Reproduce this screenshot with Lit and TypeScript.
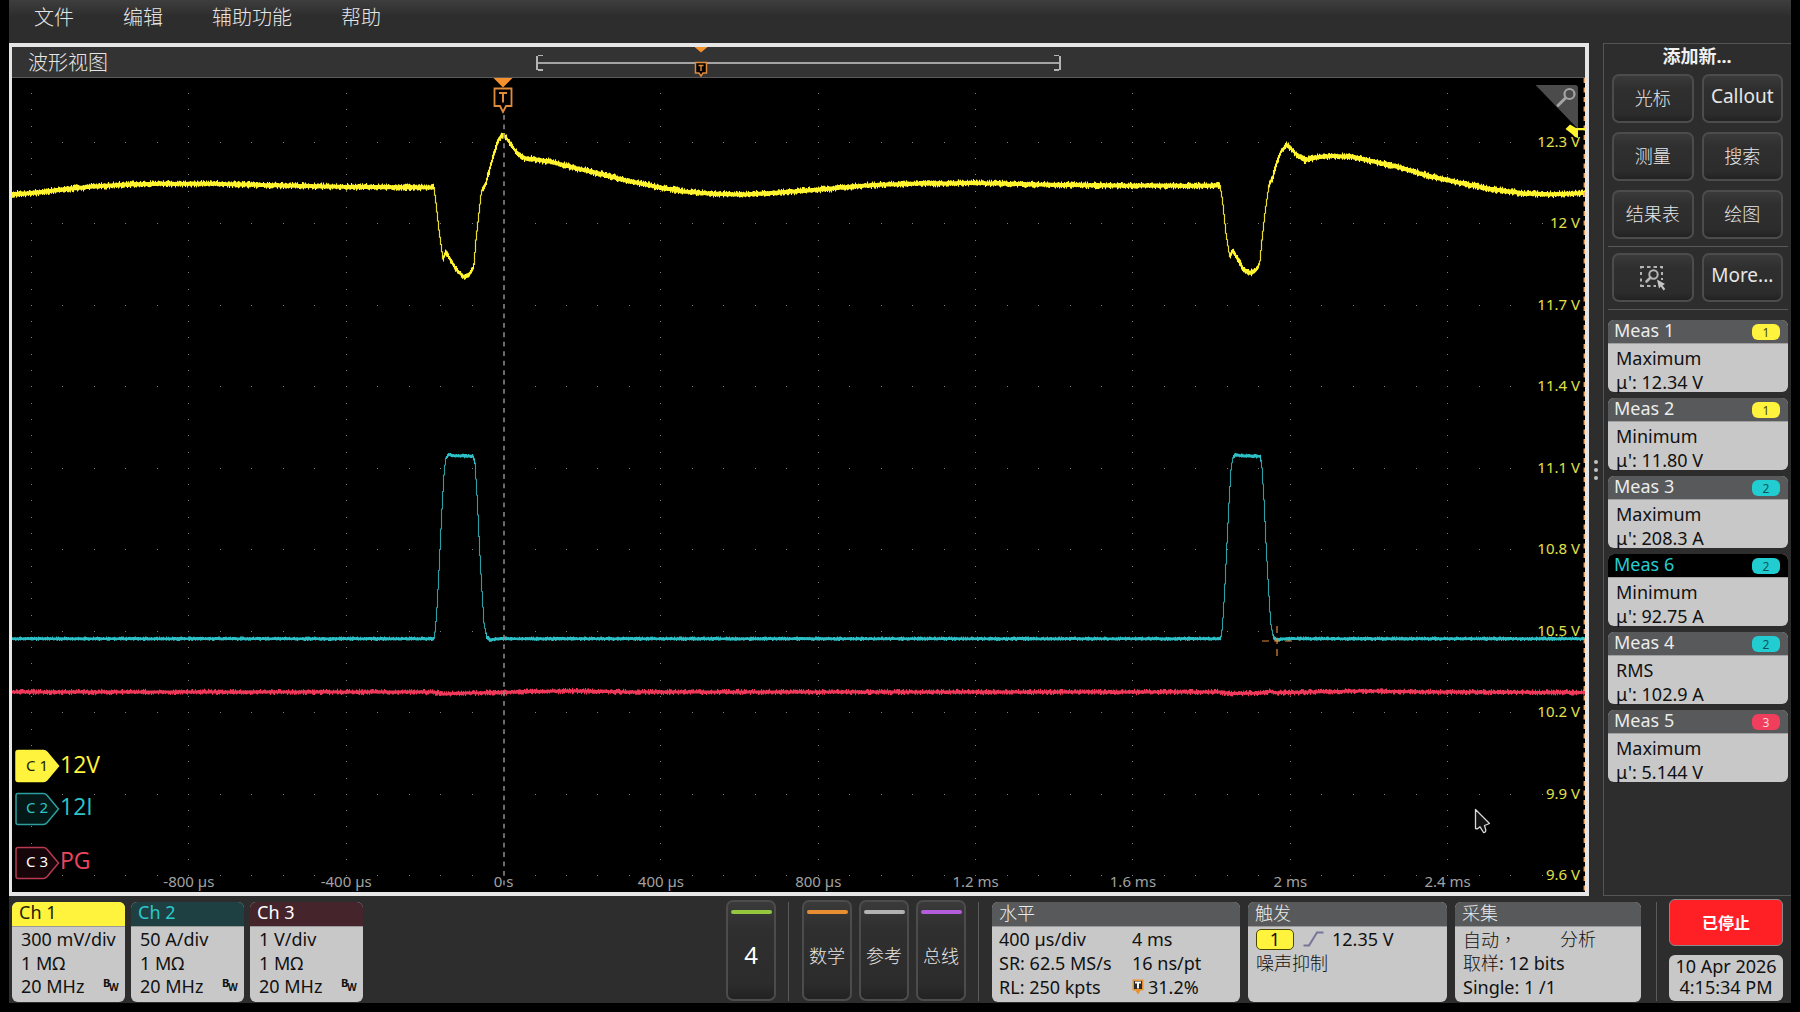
import { LitElement, html, svg, css } from "lit";
import { customElement, property } from "lit/decorators.js";
import { classMap } from "lit/directives/class-map.js";
import { styleMap } from "lit/directives/style-map.js";

type Point = [number, number];

/* Plot canvas units; the drawing scales with the window. */
const PLOT_W = 1573;
const PLOT_H = 814;
const GRID_X0 = 19.5;
const GRID_Y0 = 64.8;
const DIV_X = 157.35;
const DIV_Y = 81.5;
const TRIGGER_X = 492;

const CH1: Point[] = [
  [0, 116.2], [19, 115.1], [38, 113], [57, 110.8], [84, 108.3], [114, 106.5], [149, 105.8], [202, 105.8],
  [256, 107.2], [332, 108.8], [422, 109.5], [424, 125], [427, 152], [431, 181], [434, 173.7], [439.6, 184],
  [445.3, 192.7], [452, 199], [457, 196.7], [461.8, 189], [464, 162], [467, 135], [469.5, 112.7], [474, 105],
  [478, 90], [481.7, 77], [485.5, 63.7], [490, 57], [492.5, 57.5], [497, 63.7], [502.7, 72], [508.5, 78.2],
  [514, 80.5], [523.8, 81.5], [539, 83.8], [554.4, 87.8], [569.7, 91.5], [588, 95.8], [614.8, 102.5], [645.4, 109],
  [672, 113.5], [702.8, 116], [729.6, 116.5], [760, 115], [806, 111.6], [856, 107.3], [894, 105.8], [963, 105],
  [1028, 106.6], [1104.6, 107.6], [1188, 107.8], [1208, 107.4], [1210.5, 122], [1214, 155.3], [1217.8, 179.3],
  [1220.5, 172], [1226.3, 182], [1232, 192], [1237.8, 195], [1243.5, 192.7], [1247.7, 186], [1250, 162],
  [1253, 135.3], [1257, 107], [1260.7, 100], [1264.5, 85.3], [1269, 73.7], [1274.5, 67], [1278, 69.3],
  [1283.7, 76], [1293, 82.2], [1306.6, 79], [1320, 78], [1341, 78.7], [1360, 83.2], [1387, 89.2], [1417.6, 98.2],
  [1448, 105], [1479, 111], [1513, 115.6], [1540, 116.3], [1573, 115],
];

const CH2_PULSE: Point[] = [
  [0, 560.7], [1.3, 552], [2.7, 535], [4.7, 498.7], [6.3, 465], [8.3, 425], [10.3, 392], [12, 380],
  [15, 376.5], [19, 377.7], [39.3, 378.3], [41, 385], [43.3, 422], [45.3, 465], [47.7, 508.7], [50, 545],
  [52.7, 559.5], [56.7, 562], [62.7, 560.7],
];
const CH2: Point[] = [
  [-1, 560.7],
  ...CH2_PULSE.map(([x, y]): Point => [x + 422, y]),
  ...CH2_PULSE.map(([x, y]): Point => [x + 1208.7, y]),
  [1574, 560.7],
];
const CH3: Point[] = [
  [0, 614], [421, 614], [431, 616], [455, 615], [477, 614.6], [492, 614.6], [510, 613.6], [560, 613], [620, 614],
  [1208, 614], [1218, 615.6], [1250, 615], [1258, 613.4], [1264, 614.8], [1300, 614], [1350, 613], [1420, 614], [1573, 614.4],
];

function seeded(seed: number): () => number {
  let s = seed;
  return () => {
    s = (s * 1664525 + 1013904223) >>> 0;
    return s / 4294967296;
  };
}

/* One vertical stroke per column: the band widens on flat stretches, thins on edges. */
function trace(points: Point[], half: number, noise: number, seed: number): { flat: string; steep: string } {
  const rand = seeded(seed);
  let i = 0;
  const at = (x: number): number => {
    while (i < points.length - 2 && points[i + 1][0] < x) i++;
    const [x0, y0] = points[i];
    const [x1, y1] = points[i + 1];
    return y0 + ((y1 - y0) * (x - x0)) / (x1 - x0);
  };
  let flat = "";
  let steep = "";
  for (let x = 0; x < PLOT_W; x++) {
    const a = at(x);
    const b = at(x + 1);
    const slope = Math.abs(b - a);
    const h = slope > 4 ? 0.4 : slope > 0.9 ? half * 0.65 : half;
    const n = slope > 4 ? 0 : noise;
    const top = Math.min(a, b) - h - n * rand() ** 2;
    const bottom = Math.max(a, b) + h + n * rand() ** 2;
    const seg = `M${x + 0.5} ${top.toFixed(1)}V${bottom.toFixed(1)}`;
    if (slope > 4) steep += seg;
    else flat += seg;
  }
  return { flat, steep };
}

function gridDots(): string {
  let d = "";
  for (let r = 0; r < 10; r++) {
    const y = Math.round(GRID_Y0 + r * DIV_Y) - 0.5;
    for (let c = 1; c <= 48; c++) {
      if (c % 5) d += `M${Math.floor(GRID_X0 + (c * DIV_X) / 5)} ${y}h1`;
    }
  }
  for (let c = 0; c < 10; c++) {
    const x = Math.floor(GRID_X0 + c * DIV_X);
    if (c === 3) continue;
    for (let m = -3; m <= 45; m++) d += `M${x} ${Math.round(GRID_Y0 + (m * DIV_Y) / 5) - 0.5}h1`;
  }
  return d;
}

const GRID = gridDots();
const T1 = trace(CH1, 1.9, 2, 7);
const T2 = trace(CH2, 1.3, 1, 21);
const T3 = trace(CH3, 1.4, 1.8, 99);

const pct = (v: number, total: number): string => `${((v / total) * 100).toFixed(3)}%`;

const VOLTS = ["12.3 V", "12 V", "11.7 V", "11.4 V", "11.1 V", "10.8 V", "10.5 V", "10.2 V", "9.9 V", "9.6 V"];
const TIMES = ["-800 µs", "-400 µs", "0 s", "400 µs", "800 µs", "1.2 ms", "1.6 ms", "2 ms", "2.4 ms"];

@customElement("scope-plot")
export class ScopePlot extends LitElement {
  static styles = css`
    :host {
      display: block;
      position: relative;
      flex: 1;
      min-height: 400px;
      background: #000;
      overflow: hidden;
    }
    .canvas {
      position: absolute;
      inset: 0;
      width: 100%;
      height: 100%;
      display: block;
    }
    .volt, .time, .mark, .handle {
      position: absolute;
      white-space: nowrap;
    }
    .volt {
      right: 5px;
      transform: translateY(-50%);
      font-size: 15px;
      line-height: 16px;
      color: #e2e04a;
    }
    .time {
      bottom: 3px;
      transform: translateX(-50%);
      font-size: 15px;
      line-height: 16px;
      color: #a2a2a2;
    }
    .trigger {
      top: 0;
      width: 20px;
      height: 36px;
      transform: translateX(-50%);
    }
    .zoom { top: 6px; right: 0; width: 52px; height: 56px; }
    .cursor { width: 18px; height: 28px; }
    .cross { width: 32px; height: 32px; transform: translate(-50%, -50%); }
    .handle {
      left: 3px;
      display: flex;
      align-items: center;
      height: 34px;
      transform: translateY(-50%);
    }
    .tag {
      display: grid;
      width: 45px;
      height: 34px;
    }
    .tag svg, .tag span { grid-area: 1 / 1; }
    .tag span {
      align-self: center;
      padding-left: 11px;
      font-size: 15px;
      line-height: 20px;
      padding-bottom: 3px;
    }
    .name { font-family: "Open Sans", "Noto Sans", sans-serif; font-size: 23px; line-height: 30px; padding-bottom: 5px; }
    .c1 .tag span { color: #1c1c00; }
    .c1 .name { color: #fff33d; }
    .c2 .tag span, .c2 .name { color: #2cc4c6; }
    .c3 .tag span { color: #fff; }
    .c3 .name { color: #ea4660; }
  `;

  private handle(cls: string, y: number, tag: string, name: string, fill: string, stroke: string) {
    return html`<div class="handle ${cls}" style=${styleMap({ top: pct(y, PLOT_H) })}>
      <div class="tag">
        <svg viewBox="0 0 45 34" aria-hidden="true">
          <path d="M3 1.5H28.5Q30.5 1.5 32 3.2L43.5 17L32 30.8Q30.5 32.5 28.5 32.5H3Q1 32.5 1 30.5V3.5Q1 1.5 3 1.5Z" fill=${fill} stroke=${stroke} stroke-width="1.5" />
        </svg>
        <span>${tag}</span>
      </div>
      <div class="name">${name}</div>
    </div>`;
  }

  render() {
    return html`
      <svg class="canvas" viewBox="0 0 ${PLOT_W} ${PLOT_H}" preserveAspectRatio="none" aria-hidden="true">
        <path d=${GRID} stroke="#7c7c7c" stroke-width="1" />
        ${svg`
          <path d=${T3.flat + T3.steep} stroke="#f0385a" stroke-width="1.1" />
          <path d=${T2.steep} stroke="#2a9ea2" stroke-width="1.1" />
          <path d=${T2.flat} stroke="#2cc0c6" stroke-width="1.1" />
          <path d=${T1.steep} stroke="#e8dc30" stroke-width="1.2" />
          <path d=${T1.flat} stroke="#fff42e" stroke-width="1.1" />
          <path d=${`M${TRIGGER_X} 37V812`} stroke="#8e8e8e" stroke-width="1.5" stroke-dasharray="4.8 4.65" />
          <path d=${`M${PLOT_W - 0.7} 0V${PLOT_H}`} stroke="#f0a868" stroke-width="1.4" stroke-dasharray="5 4.5" />`}
      </svg>
      ${VOLTS.map((v, i) => html`<span class="volt" style=${styleMap({ top: pct(GRID_Y0 - 2 + i * DIV_Y, PLOT_H) })}>${v}</span>`)}
      ${TIMES.map((t, i) => html`<span class="time" style=${styleMap({ left: pct(GRID_X0 + (i + 1) * DIV_X, PLOT_W) })}>${t}</span>`)}
      <svg class="mark trigger" viewBox="0 0 20 36" style=${styleMap({ left: pct(TRIGGER_X - 0.5, PLOT_W) })} aria-hidden="true">
        <path d="M0.5 0H19.5L10 9.5Z" fill="#f6902c" />
        <path d="M1.5 10.5H18.5V28H13L10 34L7 28H1.5Z" fill="#000" stroke="#e08a3c" stroke-width="1.8" />
        <path d="M6 15H14M10 15V24.5" stroke="#e08a3c" stroke-width="2" fill="none" />
      </svg>
      <svg class="mark zoom" viewBox="0 0 52 56" aria-hidden="true">
        <path d="M2.5 1H42Q45 1 45 4V45Z" fill="#4b4b4b" />
        <circle cx="36.5" cy="10" r="5" fill="none" stroke="#a4a4a4" stroke-width="2.2" />
        <path d="M32.5 14L25 21.5" stroke="#a4a4a4" stroke-width="3" stroke-linecap="round" />
        <path d="M32.5 45L37 40.5L43 44H52V46.2H45V54Q41 53 39 50Z" fill="#fff42e" />
      </svg>
      <svg class="mark cross" viewBox="0 0 32 32" style=${styleMap({ left: pct(1265.5, PLOT_W), top: pct(563.5, PLOT_H) })} aria-hidden="true">
        <path d="M1 16H8M13 16H19M24 16H31M16 1V8M16 13V19M16 24V31" stroke="#e08a3c" stroke-width="1.2" fill="none" />
      </svg>
      <svg class="mark cursor" viewBox="0 0 18 28" style=${styleMap({ left: pct(1462.5, PLOT_W), top: pct(730, PLOT_H) })} aria-hidden="true">
        <path d="M1.5 1.5V20.5L3.5 20.8L6 18.8L9.5 24.5Q12 24.5 11.8 22L10.5 17.5L15.5 15.5Z" fill="#111" stroke="#d8d8d8" stroke-width="1.3" stroke-linejoin="round" />
      </svg>
      ${this.handle("c1", 688, "C 1", "12V", "#fff33d", "#fff33d")}
      ${this.handle("c2", 731, "C 2", "12I", "#041818", "#2c9ea0")}
      ${this.handle("c3", 785, "C 3", "PG", "#16060a", "#b83a50")}
    `;
  }
}

@customElement("meas-card")
export class MeasCard extends LitElement {
  @property() label = "";
  @property() kind = "";
  @property() value = "";
  @property({ type: Number }) channel = 1;
  @property({ type: Boolean }) active = false;

  static styles = css`
    :host { display: block; }
    .card {
      height: 72px;
      border-radius: 6px;
      background: #c8c8c8;
      color: #111;
      font-size: 18px;
      line-height: 24px;
      white-space: nowrap;
    }
    .head {
      display: flex;
      align-items: center;
      justify-content: space-between;
      height: 24px;
      padding: 0 8px 0 6px;
      background: #58595a;
      border-bottom: 1px solid #a0a0a0;
      border-radius: 6px 6px 0 0;
      box-sizing: border-box;
      color: #ececec;
    }
    .title { line-height: 20px; padding-bottom: 3px; }
    .active { background: #000; color: #25cdd2; }
    .badge {
      width: 28px;
      height: 16px;
      box-sizing: border-box;
      border-radius: 6px;
      text-align: center;
      font-size: 12px;
      line-height: 17px;
    }
    .ch1 { background: #fff33d; color: #4a4710; }
    .ch2 { background: #22cdd2; color: #0d5558; }
    .ch3 { background: #f03e5c; color: #ffd8de; }
    .body { padding: 2px 8px 0; }
  `;

  render() {
    return html`<div class="card">
      <div class=${classMap({ head: true, active: this.active })}>
        <span class="title">${this.label}</span>
        <span class="badge ch${this.channel}">${this.channel}</span>
      </div>
      <div class="body"><div>${this.kind}</div><div>${this.value}</div></div>
    </div>`;
  }
}

const MEAS = [
  { label: "Meas 1", kind: "Maximum", value: "μ': 12.34 V", channel: 1 },
  { label: "Meas 2", kind: "Minimum", value: "μ': 11.80 V", channel: 1 },
  { label: "Meas 3", kind: "Maximum", value: "μ': 208.3 A", channel: 2 },
  { label: "Meas 6", kind: "Minimum", value: "μ': 92.75 A", channel: 2, active: true },
  { label: "Meas 4", kind: "RMS", value: "μ': 102.9 A", channel: 2 },
  { label: "Meas 5", kind: "Maximum", value: "μ': 5.144 V", channel: 3 },
];

const CHANNELS = [
  { cls: "k1", name: "Ch 1", scale: "300 mV/div" },
  { cls: "k2", name: "Ch 2", scale: "50 A/div" },
  { cls: "k3", name: "Ch 3", scale: "1 V/div" },
];

@customElement("app-root")
export class AppRoot extends LitElement {
  static styles = css`
    :host {
      display: block;
      background: #000;
      font-family: "Noto Sans", "Noto Sans CJK SC", sans-serif;
      color: #e6e6e6;
    }
    button { font: inherit; color: inherit; margin: 0; padding: 0; border: 0; background: none; }
    .app {
      display: flex;
      flex-direction: column;
      box-sizing: border-box;
      min-height: 100vh;
      padding: 0 9px;
      border-bottom: 9px solid #000;
    }
    .menu {
      display: flex;
      gap: 49px;
      align-items: flex-start;
      height: 43px;
      padding-left: 25px;
      background: linear-gradient(#3e3e3e, #2d2d2d 38%);
    }
    .menu button { font-size: 20px; line-height: 36px; font-weight: 300; }
    .main { display: flex; flex: 1; background: #2d2d2d; }
    .view {
      display: flex;
      flex-direction: column;
      flex: 1;
      min-width: 0;
      border: 4px solid #e6e6e6;
      border-left-width: 3px;
    }
    .bar {
      display: grid;
      grid-template-columns: repeat(3, 1fr);
      height: 31px;
      box-sizing: border-box;
      background: #333;
      border-bottom: 1px solid #5a5a5a;
    }
    .bar h1 { margin: 0; padding-left: 16px; font-size: 20px; line-height: 32px; height: 30px; font-weight: 300; }
    .overview {
      position: relative;
      align-self: center;
      height: 14px;
      margin-top: 2px;
      border: 2px solid #b4b4b4;
      border-width: 0 2px;
    }
    .overview::before {
      content: "";
      position: absolute;
      left: 0;
      right: 0;
      top: 6px;
      height: 2px;
      background: #a4a4a4;
    }
    .end { position: absolute; top: -1px; width: 5px; height: 13px; border: solid #b4b4b4; border-width: 1px 0 2px; }
    .end.l { left: 0; }
    .end.r { right: 0; }
    .pos { position: absolute; top: -9px; width: 14px; height: 30px; transform: translateX(-50%); }
    .grip {
      display: flex;
      flex-direction: column;
      align-items: center;
      justify-content: center;
      gap: 4px;
      width: 14px;
    }
    .grip i { width: 4px; height: 4px; border-radius: 50%; background: #c2c2c2; }
    .side {
      width: 188px;
      box-sizing: border-box;
      border: 1px solid #555;
      border-right: 0;
      padding: 0 3px 0 4px;
    }
    .side h2 { margin: 0 0 6px; text-align: center; font-size: 18px; line-height: 24px; font-weight: 700; padding-right: 2px; color: #f0f0f0; }
    .pad {
      display: grid;
      grid-template-columns: 1fr 1fr;
      gap: 9px 8px;
      padding: 0 5px 7px 4px;
      border-bottom: 1px solid #585858;
    }
    .pad + .pad { padding-top: 6px; }
    .pad button, .pill {
      box-sizing: border-box;
      border: 2px solid #4c4c4c;
      border-radius: 7px;
      background: linear-gradient(#3a3a3a, #2f2f2f 28%, #2c2c2c 84%, #222);
      font-size: 18px;
      font-weight: 300;
    }
    .pad button { height: 49px; display: grid; place-items: center; line-height: 24px; }
    .pad button span { padding-bottom: 2px; }
    .pad button .latin { font-size: 19px; font-weight: 400; padding-bottom: 5px; }
    .list { display: grid; gap: 6px; padding-top: 10px; }
    .bottom {
      display: flex;
      align-items: flex-start;
      height: 107px;
      box-sizing: border-box;
      padding: 6px 8px 0 3px;
      background: #2d2d2d;
      white-space: nowrap;
    }
    .chs { display: flex; gap: 6px; margin-right: auto; }
    .panel {
      display: flex;
      flex-direction: column;
      height: 100px;
      box-sizing: border-box;
      border-radius: 6px;
      overflow: hidden;
      background: #c8c8c8;
      color: #111;
      font-size: 18px;
      line-height: 24px;
    }
    .panel header { height: 24px; line-height: 22px; padding: 0 7px; background: #57595a; color: #ececec; border-bottom: 1px solid #9a9a9a; }
    .panel.ch header { line-height: 20px; }
    .ch { width: 113px; }
    .ch .body { padding: 0 9px; }
    .panel.k1 header { background: #fff33d; color: #222200; }
    .panel.k2 header { background: #1e4042; color: #2cc8cc; }
    .panel.k3 header { background: #46242c; color: #fff; }
    .last { display: flex; justify-content: space-between; line-height: 22px; }
    .bw { width: 15px; height: 16px; margin-right: -2px; position: relative; font-size: 11px; line-height: 12px; padding-top: 2px; font-weight: 700; }
    .bw sub { position: absolute; left: 6px; top: 6px; font-size: 10px; line-height: 12px; }
    .group { display: flex; gap: 7px; }
    .pill {
      display: flex;
      flex-direction: column;
      align-items: center;
      width: 50px;
      height: 101px;
      padding: 8px 2px 0;
      margin-top: -2px;
    }
    .pill i { width: 41px; height: 4px; border-radius: 2px; }
    .pill span { margin: auto; padding-bottom: 1px; line-height: 26px; }
    .pill .big { font-size: 24px; font-weight: 400; color: #fff; padding-bottom: 3px; }
    .green { background: #93c83c; }
    .orange { background: #e88e30; }
    .grey { background: #b2b2b2; }
    .violet { background: #b45edc; }
    .sep { width: 1px; height: 99px; background: #5a5a5a; }
    .s1 { margin: 0 13px 0 12px; }
    .s2 { margin: 0 13px 0 12px; }
    .s3 { margin: 0 12px 0 15px; }
    .panels { display: flex; gap: 8px; }
    .horiz { width: 248px; }
    .trig { width: 199px; }
    .acq { width: 186px; }
    .two { display: grid; grid-template-columns: 133px 1fr; padding: 0 7px; }
    .two span { display: flex; align-items: center; gap: 4px; }
    .body { padding: 0 8px; }
    .line { display: flex; align-items: center; height: 24px; }
    .src { width: 38px; height: 21px; box-sizing: border-box; border: 1px solid #4a4700; border-radius: 5px; background: #fff33d; text-align: center; line-height: 18px; }
    .slope { margin: 0 8px 0 9px; }
    .auto { width: 97px; font-family: "Noto Sans CJK TC", sans-serif; }
    .thin, .panel.info header { font-weight: 300; }
    .status { display: grid; gap: 9px; width: 114px; margin-top: -3px; }
    .stop { height: 47px; border: 1px solid #8a8a8a; border-radius: 6px; background: #ff2026; color: #fff; font-size: 16px; line-height: 24px; font-weight: 700; }
    .clock { height: 46px; padding-top: 1px; box-sizing: border-box; border-radius: 6px; background: #c8c8c8; color: #111; font-size: 18px; line-height: 21px; text-align: center; }
    .clock time { display: block; }
    svg { display: block; flex: none; }
  `;

  private pill(color: string, label: string, big = false) {
    return html`<button class="pill" type="button"><i class=${color}></i><span class=${classMap({ big })}>${label}</span></button>`;
  }

  render() {
    return html`<div class="app">
      <nav class="menu">
        ${["文件", "编辑", "辅助功能", "帮助"].map((m) => html`<button type="button">${m}</button>`)}
      </nav>
      <div class="main">
        <section class="view">
          <div class="bar">
            <h1>波形视图</h1>
            <div class="overview">
              <i class="end l"></i><i class="end r"></i>
              <svg class="pos" style=${styleMap({ left: "31.2%" })} viewBox="0 0 14 30" aria-hidden="true">
                <path d="M0.5 0H13.5L7 5.5Z" fill="#f6902c" />
                <path d="M1.5 15.5H12.5V26H9L7 29L5 26H1.5Z" fill="#000" stroke="#e08a3c" stroke-width="1.5" />
                <path d="M4.5 18.5H9.5M7 18.5V24" stroke="#e08a3c" stroke-width="1.4" fill="none" />
              </svg>
            </div>
          </div>
          <scope-plot></scope-plot>
        </section>
        <div class="grip" aria-hidden="true"><i></i><i></i><i></i></div>
        <aside class="side">
          <h2>添加新...</h2>
          <div class="pad">
            <button type="button"><span>光标</span></button>
            <button type="button"><span class="latin">Callout</span></button>
            <button type="button"><span>测量</span></button>
            <button type="button"><span>搜索</span></button>
            <button type="button"><span>结果表</span></button>
            <button type="button"><span>绘图</span></button>
          </div>
          <div class="pad">
            <button type="button" aria-label="Zoom">
              <svg width="28" height="28" viewBox="0 0 28 28" aria-hidden="true">
                <path d="M2 4.5V3H5M8 3H11.5M14.5 3H18M21 3H23V4.5M2 8V11M2 14.5V17.5M23 8V11M23 14V16M2 20.5V22H5M8 22H11.5M14.5 22H17" fill="none" stroke="#b4b4b4" stroke-width="2" />
                <circle cx="14.5" cy="10.5" r="4.2" fill="none" stroke="#b4b4b4" stroke-width="2" />
                <path d="M11.5 13.5L7.5 17.5" stroke="#b4b4b4" stroke-width="2.6" stroke-linecap="round" />
                <path d="M18 15.5L20 24.5L21.8 22.6L24.5 26.5L26.3 25L23.6 21.4L26 20Z" fill="#c4c4c4" />
              </svg>
            </button>
            <button type="button"><span class="latin">More...</span></button>
          </div>
          <div class="list">
            ${MEAS.map((m) => html`<meas-card .label=${m.label} .kind=${m.kind} .value=${m.value} .channel=${m.channel} ?active=${m.active}></meas-card>`)}
          </div>
        </aside>
      </div>
      <footer class="bottom">
        <div class="chs">
          ${CHANNELS.map((c) => html`<div class="panel ch ${c.cls}">
            <header>${c.name}</header>
            <div class="body">
              <div>${c.scale}</div>
              <div>1 MΩ</div>
              <div class="last"><span>20 MHz</span><span class="bw">B<sub>W</sub></span></div>
            </div>
          </div>`)}
        </div>
        <div class="group">${this.pill("green", "4", true)}</div>
        <div class="sep s1"></div>
        <div class="group">
          ${this.pill("orange", "数学")}${this.pill("grey", "参考")}${this.pill("violet", "总线")}
        </div>
        <div class="sep s2"></div>
        <div class="panels">
          <div class="panel info horiz">
            <header>水平</header>
            <div class="two">
              <span>400 µs/div</span><span>4 ms</span>
              <span>SR: 62.5 MS/s</span><span>16 ns/pt</span>
              <span>RL: 250 kpts</span>
              <span><svg width="12" height="16" viewBox="0 0 12 16" aria-hidden="true">
                <path d="M0.5 0.5H11.5V11.5H8.5L6 15.5L3.5 11.5H0.5Z" fill="#e8902e" />
                <path d="M2 2H10V10H2Z" fill="#2a2a2a" />
                <path d="M3 3.5H9M6 3.5V9.5" stroke="#f4f4f4" stroke-width="2" />
              </svg>31.2%</span>
            </div>
          </div>
          <div class="panel info trig">
            <header>触发</header>
            <div class="body">
              <div class="line">
                <span class="src">1</span>
                <svg class="slope" width="21" height="16" viewBox="0 0 21 16" aria-hidden="true">
                  <path d="M0.5 14.5H6L14 1.5H20.5" fill="none" stroke="#77749a" stroke-width="2" />
                </svg>
                <span>12.35 V</span>
              </div>
              <div class="line thin">噪声抑制</div>
            </div>
          </div>
          <div class="panel info acq">
            <header>采集</header>
            <div class="body">
              <div class="line thin"><span class="auto" lang="zh-TW">自动，</span><span>分析</span></div>
              <div class="line"><span class="thin">取样</span>: 12 bits</div>
              <div class="line">Single: 1 /1</div>
            </div>
          </div>
        </div>
        <div class="sep s3"></div>
        <div class="status">
          <button class="stop" type="button">已停止</button>
          <div class="clock"><time>10 Apr 2026</time><time>4:15:34 PM</time></div>
        </div>
      </footer>
    </div>`;
  }
}
